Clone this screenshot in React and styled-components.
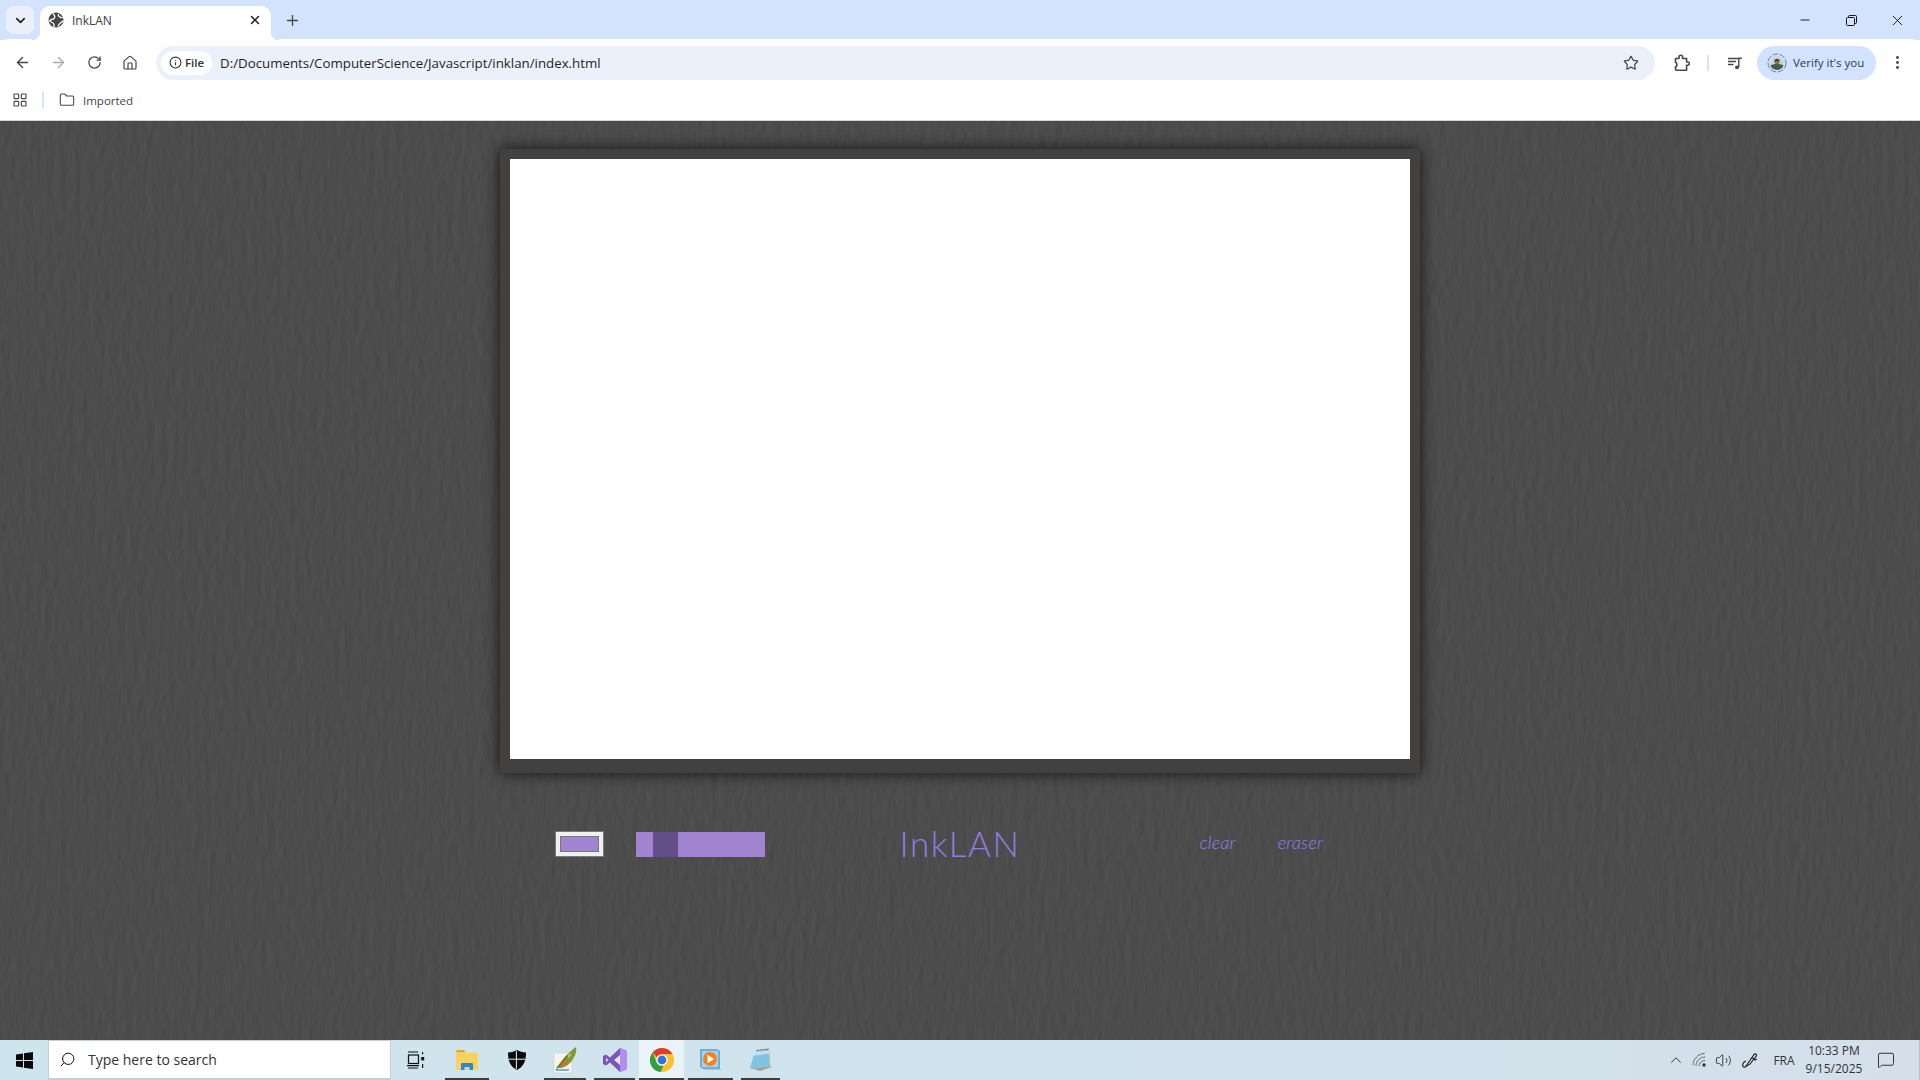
import React from "react";
import styled, { createGlobalStyle } from "styled-components";
import {
  ArrowLeft,
  ArrowRight,
  ChevronDown,
  ChevronUp,
  House,
  Info,
  LayoutGrid,
  Folder,
  Minus,
  MessageSquare,
  MoreVertical,
  Plus,
  RotateCw,
  Search,
  Star,
  Volume2,
  X,
} from "lucide-react";

const Global = createGlobalStyle`
  html, body {
    margin: 0;
    padding: 0;
    height: 100%;
    overflow: hidden;
    font-family: "Open Sans", "Liberation Sans", sans-serif;
  }
`;

const Screen = styled.div`
  width: 1920px;
  height: 1080px;
  display: flex;
  flex-direction: column;
  overflow: hidden;
`;

const TabStrip = styled.div`
  height: 40px;
  flex: none;
  display: flex;
  align-items: flex-start;
  background: #d3e3fd;
  padding: 6px 0 0 6px;
  box-sizing: border-box;
`;

const TabList = styled.div`
  width: 28px;
  height: 28px;
  border-radius: 8px;
  background: #e9f0fc;
  display: flex;
  align-items: center;
  justify-content: center;
  color: #1f1f1f;
`;

const Tab = styled.div`
  position: relative;
  z-index: 1;
  width: 231px;
  height: 34px;
  margin-left: 6px;
  padding: 0 9px 6px 8px;
  box-sizing: border-box;
  background: #fff;
  border-radius: 10px 10px 0 0;
  display: flex;
  align-items: center;
  gap: 8px;
  color: #454746;

  &::before,
  &::after {
    content: "";
    position: absolute;
    bottom: 0;
    width: 8px;
    height: 8px;
  }
  &::before {
    left: -8px;
    background: radial-gradient(circle at 0 0, #d3e3fd 8px, #fff 8.5px);
  }
  &::after {
    right: -8px;
    background: radial-gradient(circle at 100% 0, #d3e3fd 8px, #fff 8.5px);
  }
`;

const TabTitle = styled.span`
  flex: 1;
  font-size: 12px;
  color: #3c3c3c;
`;

const NewTab = styled.div`
  margin: 3px 0 0 10px;
  width: 22px;
  height: 22px;
  display: flex;
  align-items: center;
  justify-content: center;
  color: #444;
`;

const WindowButtons = styled.div`
  margin-left: auto;
  margin-top: -6px;
  height: 40px;
  display: flex;
  align-items: center;
  color: #111;
`;

const WindowButton = styled.div`
  width: 46px;
  height: 32px;
  display: flex;
  align-items: center;
  justify-content: center;
`;

const Toolbar = styled.div`
  height: 41px;
  flex: none;
  margin-top: -1px;
  background: #fff;
  display: flex;
  align-items: center;
  padding: 6px 5px 0 4px;
  box-sizing: border-box;
  border-radius: 8px 8px 0 0;
`;

const ToolButton = styled.div`
  width: 36px;
  height: 34px;
  flex: none;
  display: flex;
  align-items: center;
  justify-content: center;
  color: ${(p) => (p.$off ? "#a8abaf" : "#474747")};
`;

const Omnibox = styled.div`
  flex: 1;
  height: 34px;
  margin: 0 9px 0 8px;
  padding: 0 16px 0 5px;
  border-radius: 17px;
  background: #ebf1fb;
  display: flex;
  align-items: center;
`;

const FileChip = styled.div`
  width: 51px;
  height: 24px;
  box-sizing: border-box;
  border-radius: 12px;
  background: #fff;
  display: flex;
  align-items: center;
  justify-content: center;
  gap: 3px;
  font-size: 11.5px;
  font-weight: 600;
  color: #333;
`;

const Url = styled.span`
  flex: 1;
  margin-left: 8px;
  font-size: 13.3px;
  color: #1f1f1f;
`;

const Divider = styled.div`
  width: 2px;
  height: 16px;
  flex: none;
  background: #d3e3fd;
`;

const ToolbarDivider = styled(Divider)`
  margin: 0 8px 0 7px;
`;

const VerifyPill = styled.div`
  width: 119px;
  height: 34px;
  flex: none;
  margin-left: 4px;
  margin-right: 3px;
  border-radius: 17px;
  background: #d3e3fd;
  display: flex;
  align-items: center;
  gap: 6px;
  padding-left: 10px;
  box-sizing: border-box;
  font-size: 11.5px;
  color: #2a3a55;
`;

const Bookmarks = styled.div`
  height: 41px;
  flex: none;
  background: #fff;
  display: flex;
  align-items: center;
  padding-left: 12px;
  box-sizing: border-box;
  border-bottom: 1px solid #d5d5d5;
  color: #474747;
`;

const BookmarkDivider = styled(Divider)`
  margin: 0 15px 0 14px;
`;

const BookmarkLabel = styled.span`
  margin-left: 8px;
  font-size: 11.5px;
  color: #444;
`;

const Page = styled.main`
  position: relative;
  flex: 1;
  min-height: 0;
  background: #4b4b4b;
  display: flex;
  flex-direction: column;
  align-items: center;
  padding-top: 28px;
  box-sizing: border-box;
  overflow: hidden;
`;

const Texture = styled.svg`
  position: absolute;
  inset: 0;
  width: 100%;
  height: 100%;
`;

const Frame = styled.div`
  position: relative;
  padding: 10px 10px 14px;
  background: #42413f;
  border-radius: 3px;
  box-shadow: 0 0 16px rgba(0, 0, 0, 0.75);
`;

const Board = styled.canvas`
  display: block;
  background: #fff;
`;

const Controls = styled.div`
  position: relative;
  width: 920px;
  height: 52px;
  margin-top: 45px;
  display: grid;
  grid-template-columns: 1fr auto 1fr;
  align-items: center;
`;

const LeftTools = styled.div`
  display: flex;
  align-items: center;
  gap: 32px;
  padding-left: 55px;
`;

const RightTools = styled.div`
  display: flex;
  align-items: center;
  justify-content: flex-end;
  gap: 42px;
  padding: 0 97px 5px 0;
`;

const ColorInput = styled.input`
  -webkit-appearance: none;
  appearance: none;
  width: 49px;
  height: 26px;
  margin: 0;
  padding: 0;
  display: block;
  box-sizing: border-box;
  border: 1px solid #7a7a7a;
  border-radius: 1px;
  background: #f0f0f0;

  &::-webkit-color-swatch-wrapper {
    padding: 4px;
  }
  &::-webkit-color-swatch {
    border: 1px solid #777;
    border-radius: 0;
  }
`;

const SizeInput = styled.input`
  -webkit-appearance: none;
  appearance: none;
  display: block;
  width: 129px;
  height: 25px;
  margin: 0;
  background: #a084d0;
  outline: none;

  &::-webkit-slider-thumb {
    -webkit-appearance: none;
    width: 25px;
    height: 25px;
    background: #634e88;
  }
`;

const Title = styled.h1`
  margin: 0 0 3px;
  font-family: "Lato", "Roboto", sans-serif;
  font-weight: 300;
  font-size: 35px;
  letter-spacing: 1.5px;
  color: #917ce0;
`;

const TextButton = styled.button`
  border: 0;
  padding: 0;
  background: none;
  font-family: "Lato", "Roboto", sans-serif;
  font-weight: 300;
  font-style: italic;
  font-size: 18.5px;
  color: #8f80e6;
`;

const Taskbar = styled.footer`
  height: 40px;
  flex: none;
  display: flex;
  align-items: stretch;
  background: linear-gradient(90deg, #cfe5ee, #d0e3ec 50%, #d4dfea);
  box-sizing: border-box;
  border-right: 1px solid #b5c0ca;
`;

const StartButton = styled.div`
  width: 48px;
  flex: none;
  display: flex;
  align-items: center;
  justify-content: center;
`;

const SearchBox = styled.div`
  width: 343px;
  flex: none;
  background: #fff;
  box-sizing: border-box;
  border: 1px solid #c8cdd0;
  border-bottom-width: 2px;
  display: flex;
  align-items: center;
  padding-left: 10px;
  gap: 12px;
  font-size: 14px;
  color: #333;
`;

const SearchIcon = styled(Search)`
  transform: scaleX(-1);
`;

const TaskButton = styled.div`
  position: relative;
  width: ${(p) => p.$w || 49}px;
  flex: none;
  display: flex;
  align-items: center;
  justify-content: center;
  background: ${(p) => (p.$active ? "#e9f3f8" : "transparent")};

  &::after {
    content: ${(p) => (p.$running ? '""' : "none")};
    position: absolute;
    left: ${(p) => (p.$active ? 0 : 4)}px;
    right: ${(p) => (p.$active ? 0 : 4)}px;
    bottom: 0;
    height: 2px;
    background: #3d3d3d;
  }
`;

const Tray = styled.div`
  margin-left: auto;
  display: flex;
  align-items: center;
  color: #222;
`;

const TraySlot = styled.div`
  width: ${(p) => p.$w}px;
  display: flex;
  align-items: center;
  justify-content: center;
`;

const Lang = styled.span`
  width: 36px;
  text-align: center;
  font-size: 12px;
  color: #333;
`;

const Clock = styled.div`
  width: 64px;
  text-align: center;
  font-size: 12px;
  line-height: 18px;
  color: #333;
`;

const GlobeIcon = () => (
  <svg width="16" height="16" viewBox="0 0 16 16">
    <circle cx="8" cy="8" r="7.500" fill="#454746" />
    <path d="M5 1.500C7 3.500 7.500 5 6 6.500S2.500 7 1.500 9c1 1.500 3 1 4 2.500s0 2.500 1 3.500M10 14.500c.5-2 1.500-3 3-4 1-.8 1.500-1.500 2-1.500M10.500 2c-.5 1.500.5 3 2.500 3.500l1.500.2" fill="none" stroke="#fff" strokeWidth="1.300" />
  </svg>
);

const PuzzleIcon = () => (
  <svg width="18" height="18" viewBox="0 0 18 18" fill="none" stroke="#474747" strokeWidth="1.600" strokeLinejoin="round">
    <path d="M2.500 4.500H6V3a1.800 1.800 0 0 1 3.600 0v1.500h4V8h1.200a1.600 1.600 0 0 1 0 3.200h-1.200v5H3.500a1 1 0 0 1-1-1v-2.400c1.800 0 1.800-4.300 0-4.300z" />
  </svg>
);

const Avatar = () => (
  <svg width="20" height="20" viewBox="0 0 20 20">
    <circle cx="10" cy="10" r="9" fill="none" stroke="#5a7fc0" strokeWidth="1" strokeDasharray="6 1.5" />
    <circle cx="10" cy="10" r="7" fill="#c9d5d8" />
    <path d="M3.500 12.500c2-2 11-2 13 0a7 7 0 0 1-13 0z" fill="#4d5a46" />
    <circle cx="10" cy="8.500" r="2.700" fill="#8a6b58" />
    <path d="M7.400 8c.3-2.400 4.900-2.400 5.200 0-1.600-.8-3.600-.8-5.200 0z" fill="#2c2a2a" />
  </svg>
);

const MediaQueue = () => (
  <svg width="16" height="16" viewBox="0 0 16 16" fill="none" stroke="#474747" strokeWidth="1.400">
    <path d="M1 3.500h10M1 6.500h8M1 9.500h5.500" />
    <path d="M11.800 12.200V3.200h3" />
    <circle cx="10" cy="12.300" r="1.900" fill="#474747" stroke="none" />
  </svg>
);

const RestoreIcon = () => (
  <svg width="11" height="11" viewBox="0 0 11 11" fill="none" stroke="#111" strokeWidth="1">
    <rect x="0.500" y="2.500" width="8" height="8" rx="1" />
    <path d="M2.500 2.500v-1a1 1 0 0 1 1-1h6a1 1 0 0 1 1 1v6a1 1 0 0 1-1 1h-1" />
  </svg>
);

const WindowsLogo = () => (
  <svg width="17" height="17" viewBox="0 0 17 17" fill="#0a0a0a">
    <path d="M0 2.400 7 1.400v6.600H0zM8 1.300 17 0v8H8zM0 9h7v6.600L0 14.600zM8 9h9v8L8 15.700z" />
  </svg>
);

const TaskViewIcon = () => (
  <svg width="18" height="18" viewBox="0 0 18 18" fill="none" stroke="#111" strokeWidth="1.200">
    <path d="M1 1h10M1 17h10M0 14.600h12" />
    <rect x="1.500" y="4" width="10" height="8.500" />
    <path d="M15.600 1v2.200M15.600 13v4" />
    <rect x="14.200" y="6" width="3" height="3.400" fill="#111" stroke="none" />
  </svg>
);

const ExplorerIcon = () => (
  <svg width="22" height="20" viewBox="0 0 22 20">
    <path d="M0 1.500A1.500 1.500 0 0 1 1.500 0H8l2 2.500H0z" fill="#e8a51f" />
    <rect y="2.500" width="22" height="17.500" rx="1" fill="#fcd25f" />
    <path d="M5 20v-6a1 1 0 0 1 1-1h10a1 1 0 0 1 1 1v6h-3.500v-3h-5v3z" fill="#2a87d8" />
  </svg>
);

const ShieldIcon = () => (
  <svg width="18" height="20" viewBox="0 0 18 20">
    <path d="M9 0c2.600 1.700 5.400 2.400 9 2.500 0 8-2 14-9 17.500C2 16.500 0 10.500 0 2.500 3.600 2.400 6.400 1.700 9 0z" fill="#0b0b0b" />
    <path d="M8.400 1v18M1 9.200h16" stroke="#e8f1f6" strokeWidth="1" />
  </svg>
);

const FeatherIcon = () => (
  <svg width="24" height="28" viewBox="0 0 24 28">
    <rect x="1" y="7" width="18" height="20" fill="#f6f4ee" stroke="#cfcfcf" strokeWidth="0.600" />
    <path d="M3 22 10 13c2-3 5-5 7-7 2-2 4-4 6-5 1 4-1 9-3 12-2 4-7 8-12 9z" fill="#7f9a35" />
    <path d="M8 17c2-3 4-4 6-3-1 3-3 6-6 7z" fill="#e2692a" />
    <path d="M14 9c1.500-1 3-1.500 4.500-1.500-.5 2-1.500 3.500-3 4.500z" fill="#d6c02e" />
    <path d="M3 24h13" stroke="#3a78c8" strokeWidth="1.200" />
    <path d="M3 24 15 9" stroke="#28506b" strokeWidth="0.700" />
  </svg>
);

const StudioIcon = () => (
  <svg width="24" height="24" viewBox="0 0 24 24">
    <path d="M17 0l7 3v18l-7 3-10-9.500-4 3L0 16V8l3-1.500 4 3z" fill="#7a54b6" />
    <path d="M17 0l7 3v18l-7 3z" fill="#b48cf0" />
    <path d="M3 9.500v5L5.500 12z" fill="#d9cbf0" />
    <path d="M17 7v10l-6-5z" fill="#dfe6ee" />
  </svg>
);

const ChromeIcon = () => (
  <svg width="24" height="24" viewBox="0 0 24 24">
    <circle cx="12" cy="12" r="12" fill="#fbc02d" />
    <path d="M12 0a12 12 0 0 1 10.400 6H12a6 6 0 0 0-5.200 3L2.600 4.600A12 12 0 0 1 12 0z" fill="#dd3d30" />
    <path d="M2.600 4.600 6.800 15a6 6 0 0 0 6.700 2.800L10.600 24A12 12 0 0 1 2.600 4.600z" fill="#2f9e44" />
    <circle cx="12" cy="12" r="5.600" fill="#fff" />
    <circle cx="12" cy="12" r="4.400" fill="#2f73e0" />
  </svg>
);

const PlayerIcon = () => (
  <svg width="24" height="24" viewBox="0 0 24 24">
    <path d="M1 1h17l3 2v18H4l-3-2z" fill="#6eaedb" />
    <rect x="3" y="3" width="16" height="16" fill="#a8d3ef" />
    <path d="M21 3v18l2 1H6l-2-1h17z" fill="#8fa7b6" opacity="0.500" />
    <circle cx="11" cy="11" r="7" fill="#f5811f" />
    <path d="M8.500 6.800 15 11l-6.500 4.200z" fill="#fff" />
  </svg>
);

const NotepadIcon = () => (
  <svg width="24" height="24" viewBox="0 0 24 24">
    <path d="M8 3 21 1l2 18-12 4z" fill="#d9d9d2" />
    <path d="M6 3 20 1.500l1 17L1 20z" fill="#7fc4e3" />
    <path d="M6 3 20 1.500l.3 4L3 8z" fill="#bfe3f3" />
    <path d="M7 2.500l13-1.500M9 1.800v2M12 1.500v2M15 1.200v2M18 1v2" stroke="#666" strokeWidth="0.700" />
    <path d="M21 18.500 23 19l-12 4-10-3z" fill="#9aa5a8" />
  </svg>
);

const WifiIcon = () => (
  <svg width="16" height="16" viewBox="0 0 16 16" fill="none" stroke="#333" strokeWidth="1">
    <path d="M1 13A12 12 0 0 1 13 1.500M4 13.500a9 9 0 0 1 9-8.500M7 14a6 6 0 0 1 6-5.500" strokeDasharray="1.300 0.500" />
    <circle cx="12" cy="13" r="1.700" fill="#333" stroke="none" />
  </svg>
);

const PenIcon = () => (
  <svg width="18" height="18" viewBox="0 0 18 18" fill="none" stroke="#222" strokeWidth="1.200">
    <path d="M5.500 14.500 13 3.500c1-1.200 3-.2 2.500 1.300L9 13c-1 1.300-3 1.300-3.500 1.500z" />
    <path d="M11 6.500 14 9l1.800-1M5 10c-3 1-4 4-3 5.500s3.500 0 4-1" />
  </svg>
);

export default function App() {
  return (
    <Screen>
      <Global />
      <TabStrip>
        <TabList>
          <ChevronDown size={15} strokeWidth={2.6} />
        </TabList>
        <Tab>
          <GlobeIcon />
          <TabTitle>InkLAN</TabTitle>
          <X size={14} strokeWidth={2.6} color="#222" />
        </Tab>
        <NewTab>
          <Plus size={17} strokeWidth={1.8} />
        </NewTab>
        <WindowButtons>
          <WindowButton>
            <Minus size={14} strokeWidth={1.6} />
          </WindowButton>
          <WindowButton>
            <RestoreIcon />
          </WindowButton>
          <WindowButton>
            <X size={17} strokeWidth={1.3} />
          </WindowButton>
        </WindowButtons>
      </TabStrip>

      <Toolbar>
        <ToolButton>
          <ArrowLeft size={17} strokeWidth={2} />
        </ToolButton>
        <ToolButton $off>
          <ArrowRight size={17} strokeWidth={2} />
        </ToolButton>
        <ToolButton>
          <RotateCw size={15} strokeWidth={2} />
        </ToolButton>
        <ToolButton>
          <House size={16} strokeWidth={1.8} />
        </ToolButton>
        <Omnibox>
          <FileChip>
            <Info size={13} strokeWidth={2} />
            File
          </FileChip>
          <Url>D:/Documents/ComputerScience/Javascript/inklan/index.html</Url>
          <Star size={16} strokeWidth={1.8} color="#474747" />
        </Omnibox>
        <ToolButton>
          <PuzzleIcon />
        </ToolButton>
        <ToolbarDivider />
        <ToolButton>
          <MediaQueue />
        </ToolButton>
        <VerifyPill>
          <Avatar />
          Verify it's you
        </VerifyPill>
        <ToolButton>
          <MoreVertical size={17} strokeWidth={2.2} />
        </ToolButton>
      </Toolbar>

      <Bookmarks>
        <LayoutGrid size={16} strokeWidth={1.7} />
        <BookmarkDivider />
        <Folder size={16} strokeWidth={1.6} />
        <BookmarkLabel>Imported</BookmarkLabel>
      </Bookmarks>

      <Page>
        <Texture aria-hidden="true">
          <filter id="paper" x="0" y="0" width="100%" height="100%" colorInterpolationFilters="sRGB">
            <feTurbulence type="fractalNoise" baseFrequency="0.14 0.05" numOctaves="3" seed="4" />
            <feDiffuseLighting surfaceScale="0.35" diffuseConstant="1" lightingColor="#585858">
              <feDistantLight azimuth="10" elevation="60" />
            </feDiffuseLighting>
          </filter>
          <rect width="100%" height="100%" filter="url(#paper)" />
        </Texture>
        <Frame>
          <Board width="900" height="600" />
        </Frame>
        <Controls>
          <LeftTools>
            <ColorInput type="color" defaultValue="#a084d0" />
            <SizeInput type="range" min="0" max="104" defaultValue="17" />
          </LeftTools>
          <Title>InkLAN</Title>
          <RightTools>
            <TextButton>clear</TextButton>
            <TextButton>eraser</TextButton>
          </RightTools>
        </Controls>
      </Page>

      <Taskbar>
        <StartButton>
          <WindowsLogo />
        </StartButton>
        <SearchBox>
          <SearchIcon size={17} strokeWidth={1.4} color="#111" />
          Type here to search
        </SearchBox>
        <TaskButton $w={50}>
          <TaskViewIcon />
        </TaskButton>
        <TaskButton $w={52} $running>
          <ExplorerIcon />
        </TaskButton>
        <TaskButton $w={47}>
          <ShieldIcon />
        </TaskButton>
        <TaskButton $w={50} $running>
          <FeatherIcon />
        </TaskButton>
        <TaskButton $w={49} $running>
          <StudioIcon />
        </TaskButton>
        <TaskButton $w={45} $active $running>
          <ChromeIcon />
        </TaskButton>
        <TaskButton $w={53} $running>
          <PlayerIcon />
        </TaskButton>
        <TaskButton $w={47} $running>
          <NotepadIcon />
        </TaskButton>
        <Tray>
          <TraySlot $w={24}>
            <ChevronUp size={18} strokeWidth={1.2} />
          </TraySlot>
          <TraySlot $w={24}>
            <WifiIcon />
          </TraySlot>
          <TraySlot $w={22}>
            <Volume2 size={17} strokeWidth={1.2} />
          </TraySlot>
          <TraySlot $w={32}>
            <PenIcon />
          </TraySlot>
          <Lang>FRA</Lang>
          <Clock>
            10:33 PM
            <br />
            9/15/2025
          </Clock>
          <TraySlot $w={40}>
            <MessageSquare size={18} strokeWidth={1.2} />
          </TraySlot>
          <TraySlot $w={13} />
        </Tray>
      </Taskbar>
    </Screen>
  );
}
